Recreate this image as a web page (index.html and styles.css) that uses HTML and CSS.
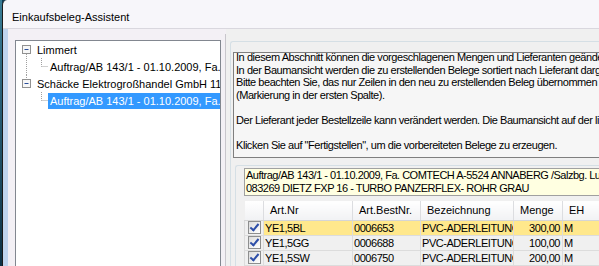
FILE: index.html
```html
<!DOCTYPE html>
<html lang="de">
<head>
    <meta charset="UTF-8" />
    <title>Einkaufsbeleg-Assistent</title>
    <link rel="stylesheet" href="styles.css">
</head>
<body>
<div class="screen">
    <div class="desk"></div>
    <div class="window">
        <div class="titlebar">Einkaufsbeleg-Assistent</div>
        <div class="frame">
            <div class="frame-strip"></div>
            <div class="client">

                <div class="tree">
                    <div class="node">
                        <svg class="lines" width="19" height="17" viewBox="0 0 19 17">
                            <line x1="10.5" y1="13" x2="10.5" y2="17" class="dot" />
                            <rect x="6.5" y="4.5" width="8" height="8" class="box" />
                            <line x1="8.5" y1="8.5" x2="12.5" y2="8.5" class="minus" />
                        </svg>
                        <span class="label">Limmert</span>
                    </div>
                    <div class="node">
                        <svg class="lines" width="32" height="17" viewBox="0 0 32 17">
                            <line x1="10.5" y1="0" x2="10.5" y2="17" class="dot" />
                            <line x1="25.5" y1="0" x2="25.5" y2="8.5" class="dot" />
                            <line x1="25.5" y1="8.5" x2="32" y2="8.5" class="dot" />
                        </svg>
                        <span class="label">Auftrag/AB 143/1 - 01.10.2009, Fa.</span>
                    </div>
                    <div class="node">
                        <svg class="lines" width="19" height="17" viewBox="0 0 19 17">
                            <line x1="10.5" y1="0" x2="10.5" y2="4" class="dot" />
                            <rect x="6.5" y="4.5" width="8" height="8" class="box" />
                            <line x1="8.5" y1="8.5" x2="12.5" y2="8.5" class="minus" />
                        </svg>
                        <span class="label">Schäcke Elektrogroßhandel GmbH 11</span>
                    </div>
                    <div class="node">
                        <svg class="lines" width="32" height="17" viewBox="0 0 32 17">
                            <line x1="25.5" y1="0" x2="25.5" y2="8.5" class="dot" />
                            <line x1="25.5" y1="8.5" x2="32" y2="8.5" class="dot" />
                        </svg>
                        <span class="label selected">Auftrag/AB 143/1 - 01.10.2009, Fa.</span>
                    </div>
                </div>

                <div class="splitter"></div>

                <div class="pane">
                    <div class="group">
                        <div class="hint">
                            <p>In diesem Abschnitt können die vorgeschlagenen Mengen und Lieferanten geändert werden.<br>
                            In der Baumansicht werden die zu erstellenden Belege sortiert nach Lieferant dargestellt.<br>
                            Bitte beachten Sie, das nur Zeilen in den neu zu erstellenden Beleg übernommen werden, die markiert sind<br>
                            (Markierung in der ersten Spalte).<br>
                            <br>
                            Der Lieferant jeder Bestellzeile kann verändert werden. Die Baumansicht auf der linken Seite wird dabei aktualisiert.<br>
                            <br>
                            Klicken Sie auf "Fertigstellen", um die vorbereiteten Belege zu erzeugen.</p>
                        </div>

                        <div class="group inner">
                            <div class="info">
                                Auftrag/AB 143/1 - 01.10.2009, Fa. COMTECH A-5524 ANNABERG /Salzbg. Lungötz<br>
                                083269 DIETZ FXP 16 - TURBO PANZERFLEX- ROHR GRAU
                            </div>

                            <table class="grid">
                                <thead>
                                    <tr>
                                        <th class="c-check"></th>
                                        <th class="c-art">Art.Nr</th>
                                        <th class="c-best">Art.BestNr.</th>
                                        <th class="c-bez">Bezeichnung</th>
                                        <th class="c-menge">Menge</th>
                                        <th class="c-eh">EH</th>
                                    </tr>
                                </thead>
                                <tbody>
                                    <tr class="current">
                                        <td class="c-check"><span class="check"></span></td>
                                        <td>YE1,5BL</td>
                                        <td>0006653</td>
                                        <td>PVC-ADERLEITUNG</td>
                                        <td class="num">300,00</td>
                                        <td>M</td>
                                    </tr>
                                    <tr>
                                        <td class="c-check"><span class="check"></span></td>
                                        <td>YE1,5GG</td>
                                        <td>0006688</td>
                                        <td>PVC-ADERLEITUNG</td>
                                        <td class="num">100,00</td>
                                        <td>M</td>
                                    </tr>
                                    <tr>
                                        <td class="c-check"><span class="check"></span></td>
                                        <td>YE1,5SW</td>
                                        <td>0006750</td>
                                        <td>PVC-ADERLEITUNG</td>
                                        <td class="num">200,00</td>
                                        <td>M</td>
                                    </tr>
                                </tbody>
                            </table>
                        </div>
                    </div>
                </div>

            </div>
        </div>
    </div>
</div>
</body>
</html>
```

FILE: styles.css
```css
body {
    margin: 0;
    background: #0f3d55;
    font-family: "Liberation Sans", Arial, sans-serif;
    color: #000;
}

.screen {
    width: 599px;
    height: 266px;
    display: flex;
    overflow: hidden;
}

.desk {
    width: 2px;
    flex: none;
    background: linear-gradient(#3a7d96, #0d3044);
}

.window {
    flex: 1;
    min-width: 0;
    display: flex;
    flex-direction: column;
    border-left: 1px solid #1a1a1a;
    border-top-left-radius: 5px;
    background: #f7f6fa;
}

.titlebar {
    flex: none;
    height: 25px;
    padding: 3px 0 0 9px;
    line-height: 28px;
    font-size: 11px;
    border-bottom: 1px solid #d9d7de;
    white-space: nowrap;
}

.frame {
    flex: 1;
    display: flex;
    min-height: 0;
}

.frame-strip {
    width: 5px;
    flex: none;
    background: #bfd4ee;
}

.client {
    flex: 1;
    min-width: 0;
    display: flex;
    padding: 11px 0 0 7px;
    background: #f3f0f5;
}

/* tree on the left */
.tree {
    width: 204px;
    flex: none;
    background: #fff;
    border: 1px solid #828790;
    border-bottom: none;
    font-size: 11px;
    overflow: hidden;
}

.node {
    display: flex;
    height: 17px;
    align-items: center;
    white-space: nowrap;
}

.lines {
    flex: none;
    display: block;
}

.lines .dot {
    stroke: #a0a0a0;
    stroke-width: 1;
    stroke-dasharray: 1 1;
}

.lines .box {
    fill: #f7f7f7;
    stroke: #919191;
}

.lines .minus {
    stroke: #2b4f9a;
    stroke-width: 1;
}

.label {
    min-width: 0;
    padding: 0 2px;
    line-height: 16px;
    overflow: hidden;
}

.label.selected {
    flex: 1;
    background: #3399ff;
    color: #fff;
}

.splitter {
    width: 1px;
    flex: none;
    margin: -6px 0 0 4px;
    background: #c8c6cc;
}

/* right side, old-style controls with a tight font */
.pane {
    flex: 1;
    min-width: 0;
    margin-top: -11px;
    padding: 12px 0 0 4px;
    background: #f0f0f0;
}

.group {
    border: 1px solid #d5dfe5;
    border-right: none;
    border-bottom: none;
    border-top-left-radius: 3px;
    padding: 10px 0 0 2px;
    height: 100%;
    box-sizing: border-box;
}

.hint {
    height: 104px;
    padding-left: 2px;
    border: 1px solid #7f7f7f;
    border-right: none;
    background: #f6f6f6;
    font-size: 11px;
    letter-spacing: -0.45px;
    overflow: hidden;
}

.hint p {
    margin: -2px 0 0;
    line-height: 12.6px;
    white-space: nowrap;
}

.group.inner {
    margin: 7px 0 0 2px;
    padding: 2px 0 0 8px;
}

.info {
    height: 26px;
    padding-left: 1px;
    border: 1px solid #a0a0a0;
    border-right: none;
    background: #ffffe1;
    font-size: 11px;
    letter-spacing: -0.5px;
    line-height: 13px;
    white-space: nowrap;
    overflow: hidden;
}

.grid {
    margin-top: 5px;
    border-collapse: collapse;
    table-layout: fixed;
    width: 378px;
    font-size: 11px;
    white-space: nowrap;
}

.grid th,
.grid td {
    box-sizing: border-box;
    overflow: hidden;
}

.grid thead tr {
    height: 19px;
}

.grid tbody tr {
    height: 15px;
}

.grid th {
    padding: 0 0 0 6px;
    text-align: left;
    font-weight: normal;
    background: linear-gradient(#ffffff, #f1f2f4);
    border-right: 1px solid #dcdde0;
    border-bottom: 1px solid #d5d5d5;
}

.grid td {
    padding: 0 2px 0 1px;
    border: 1px solid #dcdcdc;
    letter-spacing: -0.45px;
}

.grid .c-check { width: 19px; padding: 0; }
.grid .c-art { width: 89px; }
.grid .c-best { width: 68px; }
.grid .c-bez { width: 93px; }
.grid .c-menge { width: 49px; }
.grid .c-eh { width: 60px; }

.grid td.num {
    text-align: right;
}

.grid td.c-check {
    background: #f0f0f0;
    text-align: center;
}

.grid tr.current td {
    background: #ffe88c;
}

.grid tr.current td.c-check {
    background: #f0f0f0;
}

.check {
    display: inline-block;
    width: 11px;
    height: 11px;
    vertical-align: middle;
    border: 1px solid #8e8f8f;
    background: linear-gradient(135deg, #dcdcdc, #ffffff);
    position: relative;
}

.check::after {
    content: "";
    position: absolute;
    left: 3px;
    top: 0;
    width: 3px;
    height: 7px;
    border: solid #2d4ea8;
    border-width: 0 2px 2px 0;
    transform: rotate(40deg);
}
```
